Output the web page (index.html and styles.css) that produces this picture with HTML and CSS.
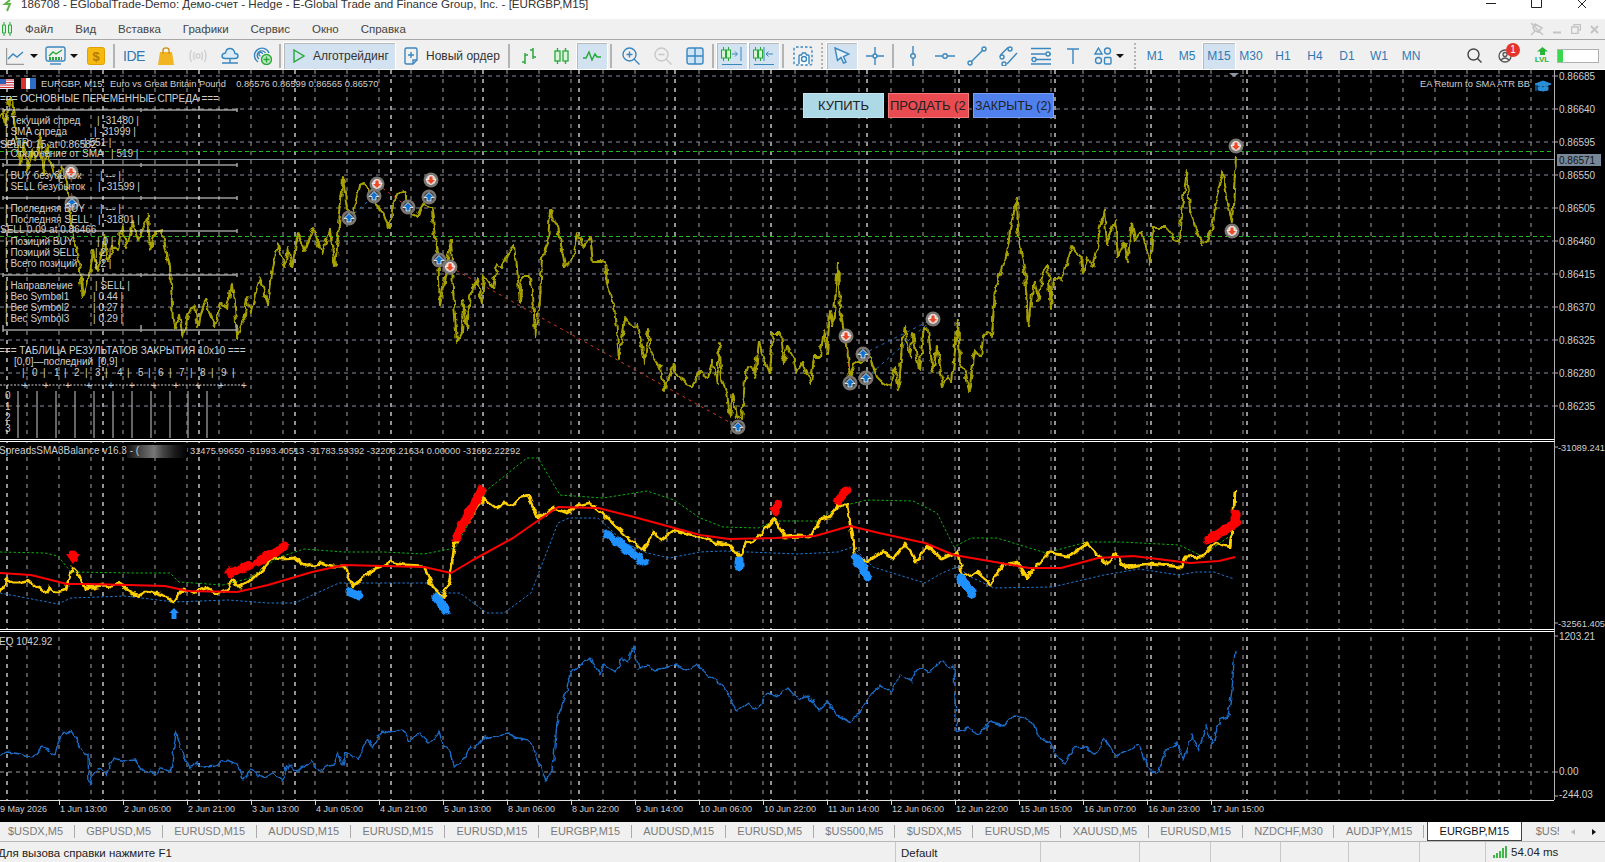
FILE: index.html
```html
<!DOCTYPE html>
<html lang="ru">

<head>
    <meta charset="UTF-8">
    <title>186708 - EGlobalTrade-Demo</title>
    <link rel="stylesheet" href="styles.css">
</head>

<body>
    <header class="titlebar">
        <svg class="app-icon" width="14" height="12" viewBox="0 0 14 12"><path d="M9 0 4 4H9L6 11" fill="none" stroke="#5fb548" stroke-width="2"/></svg>
        <span class="title">186708 - EGlobalTrade-Demo: Демо-счет - Hedge - E-Global Trade and Finance Group, Inc. - [EURGBP,M15]</span>
        <div class="winbtns">
            <svg width="10" height="8" viewBox="0 0 10 8"><path d="M0 3.5H10" stroke="#222"/></svg>
            <svg width="11" height="8" viewBox="0 0 11 8"><path d="M.5 0V7.5H10.5V0" fill="none" stroke="#222"/></svg>
            <svg width="11" height="8" viewBox="0 0 11 8"><path d="M1 0 9 8M9 0 1 8" stroke="#222"/></svg>
        </div>
    </header>

    <nav class="menubar">
        <svg class="menu-icon" width="12" height="14" viewBox="0 0 12 14"><path d="M3 0V14M9 0V14" stroke="#27a83a"/><path d="M1.500 3H4.500V11H1.500ZM7.500 3H10.500V11H7.500Z" fill="#d8f0d8" stroke="#27a83a"/></svg>
        <a>Файл</a><a>Вид</a><a>Вставка</a><a>Графики</a><a>Сервис</a><a>Окно</a><a>Справка</a>
        <div class="mdi-btns">
            <svg width="14" height="14" viewBox="0 0 14 14"><path d="M1 1 13 13M5 2 12 6 8 10 4 8 3 5ZM5 9 1 13" fill="none" stroke="#c4c4c4" stroke-width="1.500"/></svg>
            <svg width="9" height="9" viewBox="0 0 9 9"><path d="M0 7.500H8" stroke="#c4c4c4" stroke-width="2"/></svg>
            <svg width="10" height="10" viewBox="0 0 10 10"><path d="M3 2V.5H9.500V6H8M.5 3H7V9.500H.5Z" fill="none" stroke="#c4c4c4" stroke-width="1.500"/></svg>
            <svg width="9" height="9" viewBox="0 0 9 9"><path d="M1 1 8 8M8 1 1 8" stroke="#c4c4c4" stroke-width="2"/></svg>
        </div>
    </nav>

    <div class="toolbar">
        <div class="tool tool-drop">
            <svg class="ic" width="18" height="18" viewBox="0 0 18 18"><path d="M.5 1V17.500H18" stroke="#9a9a9a"/><path d="M2 12 7 7 11 10 17 5"/></svg>
            <i class="caret"></i>
        </div>
        <div class="tool tool-drop wide">
            <svg class="ic" width="21" height="20" viewBox="0 0 21 20"><rect x="1" y="1" width="19" height="14" rx="2"/><path d="M4 10 8 6 11 8 17 4" stroke="#27a83a"/><path d="M4 12.500H17" stroke="#27a83a" stroke-dasharray="2 1" stroke-width="3"/><path d="M5 18H16"/></svg>
            <i class="caret"></i>
        </div>
        <div class="tool">
            <svg width="18" height="18" viewBox="0 0 18 18"><rect x=".5" y=".5" width="17" height="17" rx="2" fill="#f7b90f" stroke="#e0a000"/><text x="9" y="13.500" class="dollar">$</text></svg>
        </div>
        <i class="sep tight"></i>
        <div class="tool tool-text">IDE</div>
        <div class="tool">
            <svg width="16" height="18" viewBox="0 0 16 18"><path d="M2 5H14L16 18H0Z" fill="#f2b522"/><path d="M5 7V3Q5 .8 8 .8T11 3V7" fill="none" stroke="#c98f10" stroke-width="1.300"/></svg>
        </div>
        <div class="tool">
            <svg width="18" height="14" viewBox="0 0 18 14" fill="none" stroke="#cfcfcf" stroke-width="1.400"><circle cx="9" cy="7" r="2"/><path d="M5.500 3Q3.500 7 5.500 11M12.500 3Q14.500 7 12.500 11M2.500 1Q-.5 7 2.500 13M15.500 1Q18.500 7 15.500 13"/></svg>
        </div>
        <div class="tool">
            <svg class="ic" width="18" height="18" viewBox="0 0 18 18"><path d="M4.500 11.500H14Q17 11.500 17 9T14 6.500Q13 1.500 9 1.500T4.500 6Q1 6.500 1 9T4.500 11.500Z" fill="#d9ecf8"/><path d="M9 11.500V16M1 16H17"/></svg>
        </div>
        <div class="tool">
            <svg class="ic" width="20" height="19" viewBox="0 0 20 19"><path d="M6 16A7.500 7.500 0 1 1 17 7M7 13A4.500 4.500 0 1 1 13.500 7M8.500 10A1.800 1.800 0 1 1 10.500 8"/><circle cx="14.500" cy="13.500" r="5" fill="#bfe8c2" stroke="#27a83a"/><path d="M14.500 10.500V16.500M11.500 13.500H17.500" stroke="#27a83a"/></svg>
        </div>
        <i class="sep tight"></i>
        <div class="tool-label algo">
            <svg width="12" height="14" viewBox="0 0 12 14"><path d="M1 1 11 7 1 13Z" fill="none" stroke="#27a83a" stroke-width="1.400"/></svg>
            <span>Алготрейдинг</span>
        </div>
        <div class="tool-label order">
            <svg class="ic" width="14" height="18" viewBox="0 0 14 18"><path d="M9 17H2.500Q1 17 1 15.500V2.500Q1 1 2.500 1H11.500Q13 1 13 2.500V13ZM9 17V13H13"/><path d="M7 5V11M4 8H10"/></svg>
            <span>Новый ордер</span>
        </div>
        <i class="sep after-label"></i>
        <div class="tool">
            <svg width="18" height="18" viewBox="0 0 18 18" fill="none" stroke="#27a83a" stroke-width="1.500"><path d="M5 6V17M2 15H5M5 8H8M13 1V12M10 3H13M13 10H16"/></svg>
        </div>
        <div class="tool">
            <svg width="15" height="16" viewBox="0 0 15 16" fill="#d8f5d8" stroke="#27a83a" stroke-width="1.300"><path d="M3.500 0V16M11.500 0V16"/><rect x="1" y="3" width="5" height="10"/><rect x="9" y="3" width="5" height="10"/></svg>
        </div>
        <div class="tool active thin">
            <svg width="18" height="12" viewBox="0 0 18 12" fill="none" stroke="#27a83a" stroke-width="1.500"><path d="M0 8H3L6 2 9 10 12 4 14 7H18"/></svg>
        </div>
        <i class="sep"></i>
        <div class="tool">
            <svg class="ic" width="18" height="18" viewBox="0 0 18 18"><circle cx="7.500" cy="7.500" r="6.500"/><path d="M12 12 17.500 17.500M7.500 4.500V10.500M4.500 7.500H10.500"/></svg>
        </div>
        <div class="tool">
            <svg class="ic muted" width="18" height="18" viewBox="0 0 18 18"><circle cx="7.500" cy="7.500" r="6.500"/><path d="M12 12 17.500 17.500M4.500 7.500H10.500"/></svg>
        </div>
        <div class="tool">
            <svg class="ic" width="18" height="18" viewBox="0 0 18 18"><rect x="1" y="1" width="16" height="16" rx="2" fill="#cfe5f5"/><path d="M9 1V17M1 9H17"/></svg>
        </div>
        <i class="sep tight"></i>
        <div class="tool active thin">
            <svg width="22" height="20" viewBox="0 0 22 20" fill="#d8f5d8" stroke="#27a83a"><path d="M2.500 1V15M7.500 1V15"/><rect x=".5" y="4" width="4" height="8"/><rect x="5.500" y="4" width="4" height="8"/><path d="M11 8H16M14 5.500 16.500 8 14 10.500" stroke="#3a87c0" fill="none"/><path d="M20 1V15M1 18.500H21" stroke="#3a87c0" fill="none"/></svg>
        </div>
        <div class="tool active thin gap-left">
            <svg width="22" height="20" viewBox="0 0 22 20" fill="#d8f5d8" stroke="#27a83a"><path d="M2.500 1V15M7.500 1V15"/><rect x=".5" y="4" width="4" height="8"/><rect x="5.500" y="4" width="4" height="8"/><path d="M13 8H20M15.500 5.500 13 8 15.500 10.500M11 1V15M1 18.500H21" stroke="#3a87c0" fill="none"/></svg>
        </div>
        <i class="sep"></i>
        <div class="tool">
            <svg class="ic" width="20" height="20" viewBox="0 0 20 20"><rect x="1" y="1" width="18" height="18" rx="2" stroke-dasharray="2.500 2"/><path d="M6 18V10Q6 9 7 9H8.500L9.500 7H12.500L13.500 9H15Q16 9 16 10V18" fill="#fff"/><circle cx="11" cy="13" r="2.500"/></svg>
        </div>
        <i class="grip"></i>
        <div class="tool active thin">
            <svg class="ic" width="16" height="17" viewBox="0 0 16 17"><path d="M1 1 15 7 9.500 9.500 12 15 9.500 16 7 10.500 3.500 13.500Z" fill="#e6f1fa"/></svg>
        </div>
        <div class="tool gap-left">
            <svg class="ic" width="18" height="18" viewBox="0 0 18 18"><circle cx="9" cy="9" r="2"/><path d="M9 0V7M9 11V18M0 9H7M11 9H18"/></svg>
        </div>
        <i class="sep tight"></i>
        <div class="tool">
            <svg class="ic" width="6" height="20" viewBox="0 0 6 20"><path d="M3 0V7.500M3 12.500V20"/><circle cx="3" cy="10" r="2.300"/></svg>
        </div>
        <div class="tool">
            <svg class="ic" width="20" height="6" viewBox="0 0 20 6"><path d="M0 3H7.500M12.500 3H20"/><circle cx="10" cy="3" r="2.300"/></svg>
        </div>
        <div class="tool">
            <svg class="ic" width="20" height="20" viewBox="0 0 20 20"><path d="M4 16 16 4"/><circle cx="3" cy="17" r="2"/><circle cx="17" cy="3" r="2"/></svg>
        </div>
        <div class="tool">
            <svg class="ic" width="20" height="20" viewBox="0 0 20 20"><path d="M1.500 9 9 1.500M8 18 18 7"/><circle cx="3" cy="11" r="2"/><circle cx="11" cy="3" r="2"/><circle cx="5" cy="18" r="2"/></svg>
        </div>
        <div class="tool">
            <svg class="ic" width="20" height="18" viewBox="0 0 20 18"><path d="M0 1.500H20M0 7H14.500M19 7H20M5 12.500H20M0 17H20"/><circle cx="17" cy="7" r="2"/><circle cx="3" cy="12.500" r="2"/></svg>
        </div>
        <div class="tool">
            <svg class="ic" width="12" height="16" viewBox="0 0 12 16"><path d="M0 1H12M6 1V16"/></svg>
        </div>
        <div class="tool tool-drop wide">
            <svg class="ic shapes" width="18" height="18" viewBox="0 0 18 18"><path d="M4.500 1 8 7H1Z"/><circle cx="13.500" cy="4" r="3"/><circle cx="4.500" cy="13.500" r="3"/><rect x="10.500" y="10.500" width="6.500" height="6.500" rx="1"/></svg>
            <i class="caret"></i>
        </div>
        <i class="grip period-grip"></i>
        <div class="periods">
            <a>M1</a><a>M5</a><a class="active">M15</a><a>M30</a><a>H1</a><a>H4</a><a>D1</a><a>W1</a><a>MN</a>
        </div>
        <div class="tool push-right">
            <svg width="15" height="15" viewBox="0 0 15 15" fill="none" stroke="#444" stroke-width="1.400"><circle cx="6.500" cy="6.500" r="5.500"/><path d="M10.500 10.500 14.500 14.500"/></svg>
        </div>
        <div class="tool account">
            <svg width="14" height="14" viewBox="0 0 14 14" fill="none" stroke="#555" stroke-width="1.300"><circle cx="7" cy="7" r="6"/><circle cx="7" cy="5.500" r="2"/><path d="M3 11Q7 7 11 11"/></svg>
            <b class="badge">1</b>
        </div>
        <div class="tool lvl">
            <svg width="11" height="8" viewBox="0 0 11 8"><path d="M5.500 0 11 4.500H8V8H3V4.500H0Z" fill="#27b53a"/></svg>
            <span>LVL</span>
        </div>
        <div class="margin-bar"><i></i></div>
    </div>

    <main class="chart">
        <div class="pane">
            <svg class="plot" width="1605" height="369" viewBox="0 70 1605 369">
                <defs>
                    <filter id="rough" filterUnits="userSpaceOnUse" x="-10" y="60" width="1625" height="750" color-interpolation-filters="sRGB">
                        <feTurbulence type="fractalNoise" baseFrequency=".16" numOctaves="1" seed="4"/>
                        <feDisplacementMap in="SourceGraphic" scale="7" xChannelSelector="R" yChannelSelector="G"/>
                    </filter>
                    <path id="vbase" class="grid-base" d="M27 70V800M59 70V800M91 70V800M123 70V800M155 70V800M187 70V800M219 70V800M251 70V800M283 70V800M315 70V800M347 70V800M379 70V800M411 70V800M443 70V800M475 70V800M507 70V800M539 70V800M571 70V800M603 70V800M635 70V800M667 70V800M699 70V800M731 70V800M763 70V800M795 70V800M827 70V800M859 70V800M891 70V800M923 70V800M955 70V800M987 70V800M1019 70V800M1051 70V800M1083 70V800M1115 70V800M1147 70V800M1179 70V800M1211 70V800M1243 70V800M1275 70V800M1307 70V800M1339 70V800M1371 70V800M1403 70V800M1435 70V800M1467 70V800M1499 70V800M1531 70V800"/>
                    <path id="vday" class="grid-day" d="M7 70V800M103 70V800M199 70V800M295 70V800M391 70V800M483 70V800M579 70V800M675 70V800M771 70V800M867 70V800M959 70V800M1055 70V800M1151 70V800M1247 70V800"/>
                    <g id="mk-up"><circle r="7.500" fill="#7a7672"/><circle r="5" fill="#3d3d3d"/><path d="M0-4.500 5 .5H2V4H-2V.5H-5Z" fill="#0f72cc" stroke="#fff" stroke-width=".8"/></g>
                    <g id="mk-down"><circle r="7.500" fill="#7a7672"/><circle r="5" fill="#d8d0cc"/><path d="M0 4.500 5-.5H2V-4H-2V-.5H-5Z" fill="#ea4a28" stroke="#fff" stroke-width=".8"/></g>
                    <linearGradient id="blur-strip">
                        <stop offset="0" stop-color="#111"/><stop offset=".2" stop-color="#444"/><stop offset=".45" stop-color="#777"/><stop offset=".6" stop-color="#444"/><stop offset=".8" stop-color="#1a1a1a"/><stop offset="1" stop-color="#000"/>
                    </linearGradient>
                </defs>

                <use href="#vbase"/>
                <use href="#vday"/>
                <path class="grid-h" d="M0 76H1554M0 109H1554M0 142H1554M0 175H1554M0 208H1554M0 241H1554M0 274H1554M0 307H1554M0 340H1554M0 373H1554M0 406H1554"/>
                <path class="level" d="M0 151.500H1554M0 236.500H1554"/>
                <path class="bid" d="M0 159.500H1554"/>

                <!-- trade lines -->
                <path class="trade-sell" d="M450 267 738 427M377 184 408 207M846 336 850 383M71 172 72 203"/>
                <path class="trade-buy" d="M863 354 933 319M866 378 933 319M349 218 374 196"/>

                <!-- price -->
                <g filter="url(#rough)">
                    <polyline id="price" class="price" points="0,118 3,110 6,125 9,100 12,98 15,130 18,150 21,165 24,140 28,170 32,150 36,160 40,135 44,175 47,145 50,160 53,170 58,180 62,165 67,183 70,215 73,237 77,253 80,270 83,298 87,280 90,275 93,250 97,270 100,262 104,235 108,262 113,247 118,250 122,225 127,247 133,222 138,240 145,223 148,215 150,250 155,232 162,230 166,250 170,267 173,322 175,328 179,315 183,337 188,315 195,305 198,328 202,310 206,298 210,312 215,327 220,303 227,308 232,285 235,308 237,337 241,325 245,315 247,297 251,312 255,295 260,277 264,290 268,305 273,267 278,245 285,267 288,247 292,268 298,233 305,250 313,228 322,253 330,230 335,267 339,225 343,178 347,210 352,215 360,185 365,183 370,197 380,208 389,228 393,205 400,192 405,190 408,210 417,217 423,203 432,210 435,237 438,253 440,305 445,277 451,240 453,290 457,343 462,333 463,300 467,330 470,295 477,280 482,303 484,275 493,288 497,265 502,267 508,253 515,245 520,303 522,277 530,277 533,293 535,337 540,300 542,257 548,243 550,210 558,227 565,267 573,258 578,233 583,247 590,237 593,262 605,262 607,283 612,302 615,304 619,360 625,318 632,327 638,325 645,363 648,328 652,357 660,367 665,390 673,365 678,377 692,387 700,372 708,378 712,360 717,383 719,343 722,380 727,393 730,417 733,393 737,417 742,420 745,378 748,366 753,367 755,377 759,342 763,357 770,373 773,333 781,333 784,363 787,346 793,357 797,372 802,363 811,383 814,357 820,357 824,330 827,353 830,310 833,327 838,263 840,310 847,347 850,377 857,360 862,363 870,357 877,377 883,383 890,386 895,367 899,390 902,343 905,327 910,357 913,333 919,370 924,327 928,330 933,373 937,347 943,386 947,375 952,382 958,320 960,363 966,373 969,392 975,350 981,357 983,337 987,332 992,337 995,287 1000,273 1007,253 1010,230 1017,198 1018,230 1022,257 1025,273 1028,327 1032,293 1035,283 1038,300 1043,273 1048,265 1051,308 1053,277 1062,280 1067,263 1072,247 1080,255 1083,273 1088,257 1092,267 1097,247 1100,227 1104,210 1107,243 1115,220 1118,257 1125,243 1127,262 1132,223 1135,240 1142,232 1145,243 1150,265 1153,227 1167,227 1172,237 1180,242 1183,200 1187,170 1190,210 1195,227 1203,245 1212,230 1215,207 1220,180 1223,173 1227,197 1232,223 1236,157"/>
                    <use href="#price" class="price-hi"/>
                </g>

                <!-- deal markers -->
                <use href="#mk-down" x="71" y="172"/>
                <use href="#mk-up" x="72" y="203"/>
                <use href="#mk-up" x="349" y="218"/>
                <use href="#mk-up" x="374" y="196"/>
                <use href="#mk-down" x="377" y="184"/>
                <use href="#mk-up" x="408" y="207"/>
                <use href="#mk-down" x="431" y="180"/>
                <use href="#mk-up" x="429" y="197"/>
                <use href="#mk-up" x="439" y="260"/>
                <use href="#mk-down" x="450" y="267"/>
                <use href="#mk-up" x="738" y="427"/>
                <use href="#mk-down" x="846" y="336"/>
                <use href="#mk-up" x="863" y="354"/>
                <use href="#mk-up" x="850" y="383"/>
                <use href="#mk-up" x="866" y="378"/>
                <use href="#mk-down" x="933" y="319"/>
                <use href="#mk-down" x="1236" y="146"/>
                <use href="#mk-down" x="1232" y="231"/>

                <path d="M1229 73H1239L1234 77Z" fill="#8c97a6"/>

                <!-- symbol header -->
                <rect x="0" y="79" width="14" height="10" fill="#e8e8f4"/>
                <path d="M0 80H14M0 82.500H14M0 85H14M0 87.500H14" stroke="#d93030"/>
                <rect x="0" y="79" width="6" height="5" fill="#2b5fb8"/>
                <rect x="21" y="78" width="15" height="11" fill="#fff"/>
                <rect x="21" y="78" width="5" height="11" fill="#d93030"/>
                <rect x="30" y="78" width="6" height="11" fill="#2b6cc4"/>
                <text x="41" y="87" class="lbl small">EURGBP, M15:  Euro vs Great Britain Pound    0.86576 0.86599 0.86565 0.86570</text>
                <text x="1530" y="87" class="lbl small" text-anchor="end">EA Return to SMA ATR BB</text>
                <path d="M1535 84 1543 81 1551 84 1543 87.500ZM1538 86.500V90Q1543 92 1548 90V86.500M1536 85V91" fill="#2b8fd8" stroke="#2b8fd8"/>

                <!-- spread info panel -->
                <text x="0" y="102" class="lbl">=== ОСНОВНЫЕ ПЕРЕМЕННЫЕ СПРЕДА ===</text>
                <path class="rule" d="M3 110H237M3 165H237M3 198H237M3 231H237M3 275H237M3 330H237"/>
                <path class="rule-tick" d="M3 108V112M141 108V112M237 108V112M3 163V167M141 163V167M237 163V167M3 196V200M141 196V200M237 196V200M3 229V233M141 229V233M237 229V233M3 273V277M141 273V277M237 273V277M3 325V332M141 325V332M237 325V332"/>

                <g class="lbl">
                    <text x="5" y="124">| Текущий спред</text><text x="97" y="124">| -31480 |</text>
                    <text x="5" y="135">| SMA спреда</text><text x="94" y="135">| -31999 |</text>
                    <text x="5" y="146">| ATR</text><text x="84" y="146">| 551 |</text>
                    <text x="5" y="157">| Отклонение от SMA</text><text x="111" y="157">| 519 |</text>
                    <text x="5" y="179">| BUY безубыток</text><text x="100" y="179">|     ---  |</text>
                    <text x="5" y="190">| SELL безубыток</text><text x="98" y="190">| -31599 |</text>
                    <text x="5" y="212">| Последняя BUY</text><text x="100" y="212">|     ---  |</text>
                    <text x="5" y="223">| Последняя SELL</text><text x="98" y="223">| -31801 |</text>
                    <text x="5" y="245">| Позиций BUY</text><text x="97" y="245">| 0  |</text>
                    <text x="5" y="256">| Позиций SELL</text><text x="95" y="256">| 2  |</text>
                    <text x="5" y="267">| Всего позиций</text><text x="95" y="267">| 2  |</text>
                    <text x="5" y="289">| Направление</text><text x="95" y="289">| SELL |</text>
                    <text x="5" y="300">| Вес Symbol1</text><text x="93" y="300">| 0.44 |</text>
                    <text x="5" y="311">| Вес Symbol2</text><text x="93" y="311">| 0.27 |</text>
                    <text x="5" y="322">| Вес Symbol3</text><text x="93" y="322">| 0.29 |</text>
                    <text x="0" y="148">SELL 0.15 at 0.86582</text>
                    <text x="0" y="233">SELL 0.09 at 0.86466</text>
                </g>

                <!-- closed results table -->
                <g class="lbl">
                    <text x="-1" y="354">=== ТАБЛИЦА РЕЗУЛЬТАТОВ ЗАКРЫТИЯ 10x10 ===</text>
                    <text x="14" y="365">[0,0]—последний</text><text x="98" y="365">[0,9]</text>
                    <text y="376" x="22 32 43 54 64 74 85 95 105 117 127 138 148 158 169 179 190 200 211 221 232">|0|1|2|3|4|5|6|7|8|9|</text>
                    <text y="389" x="22 43 65 86 108 129 151 173 195 218 241">+++++++++++</text>
                    <text x="5" y="399">0</text><text x="5" y="410">1</text><text x="5" y="421">2</text><text x="5" y="432">3</text>
                </g>
                <path class="rule-dash" d="M0 385H243"/>
                <path class="rule-bars" d="M18 391V438M37 391V438M56 391V438M75 391V438M94 391V438M113 391V438M132 391V438M151 391V438M170 391V438M188 391V438M207 391V438"/>

                <!-- price axis -->
                <path class="axis-line" d="M1554.500 70V439"/>
                <path class="axis-tick" d="M1554 76h4M1554 109h4M1554 142h4M1554 175h4M1554 208h4M1554 241h4M1554 274h4M1554 307h4M1554 340h4M1554 373h4M1554 406h4"/>
                <g class="lbl">
                    <text x="1559" y="80">0.86685</text><text x="1559" y="113">0.86640</text><text x="1559" y="146">0.86595</text>
                    <text x="1559" y="179">0.86550</text><text x="1559" y="212">0.86505</text><text x="1559" y="245">0.86460</text>
                    <text x="1559" y="278">0.86415</text><text x="1559" y="311">0.86370</text><text x="1559" y="344">0.86325</text>
                    <text x="1559" y="377">0.86280</text><text x="1559" y="410">0.86235</text>
                </g>
                <rect x="1557" y="154" width="44" height="12" fill="#778899"/>
                <text x="1559" y="163.500" class="lbl bid-text">0.86571</text>
            </svg>
            <!-- trade panel objects on the chart -->
            <div class="trade-btns">
                <button class="buy">КУПИТЬ</button>
                <button class="sell">ПРОДАТЬ (2</button>
                <button class="close">ЗАКРЫТЬ (2)</button>
            </div>
        </div>
        <div class="pane-sep"></div>

        <div class="pane">
            <svg class="plot" width="1605" height="187" viewBox="0 442 1605 187">
                <use href="#vbase"/>
                <use href="#vday"/>
                <polyline class="band-up" points="0,552 45,553 58,556 71,572 134,573 170,573 179,582 223,585 250,578 277,558 304,549 344,552 384,552 424,554 455,548 487,490 527,458 538,458 560,495 603,498 647,491 674,500 700,518 723,527 758,528 775,521 818,521 838,507 867,500 913,501 937,513 954,547 971,538 997,538 1046,553 1087,542 1121,542 1179,545 1202,556 1234,533"/>
                <polyline class="band-low" points="0,593 58,604 71,598 125,596 174,602 228,600 268,603 295,603 339,583 429,583 442,593 460,593 487,613 504,613 531,593 558,523 569,518 598,518 625,543 647,553 670,558 700,552 723,551 798,554 838,552 853,547 873,567 925,583 942,573 957,567 971,577 994,588 1052,587 1104,575 1139,569 1179,575 1196,572 1214,572 1234,579"/>
                <g filter="url(#rough)">
                    <polyline class="spread" points="0,592 7,580 13,583 20,583 29,581 38,588 47,593 50,587 56,592 66,590 72,567 78,573 85,588 94,587 103,585 112,586 120,583 130,592 138,595 146,591 156,593 165,596 174,603 183,589 192,593 205,587 217,594 228,590 232,579 239,587 254,578 262,570 272,558 283,559 295,558 306,566 321,563 332,566 344,566 353,586 363,578 373,570 391,562 405,565 424,566 433,587 443,597 449,583 455,543 466,525 478,505 484,499 496,508 505,503 513,505 520,497 528,495 538,518 554,508 567,513 580,505 589,503 607,518 625,535 643,550 654,533 661,540 674,530 688,534 700,537 717,543 729,545 740,558 746,543 758,538 775,518 784,537 797,536 810,537 821,519 830,517 838,505 847,505 853,543 856,557 867,562 882,552 893,559 905,543 916,562 928,546 942,559 957,552 963,577 977,572 991,584 1003,565 1017,562 1027,578 1037,565 1049,553 1069,556 1087,543 1107,565 1115,553 1126,568 1150,564 1182,567 1185,557 1202,556 1216,543 1230,547 1234,510 1235,489"/>
                </g>
                <polyline class="sma" points="0,573 31,575 67,584 89,584 165,586 188,591 237,592 268,585 312,572 344,565 424,567 451,573 473,560 513,538 536,522 558,507 598,508 634,517 700,535 729,539 775,538 815,536 850,526 879,533 925,543 954,555 1029,568 1061,568 1098,558 1133,556 1190,563 1219,561 1235,557"/>

                <!-- signal arrows -->
                <g filter="url(#rough)">
                    <path class="sig-red" d="M230 573 250 565M258 562 285 546M456 537 482 490M73 555V557M775 510 778 505M838 500 847 490M1208 540 1237 522M1235 522V513"/>
                    <path class="sig-blue" d="M350 592 358 595M436 597 446 610M607 534 645 563M739 561V567M856 558 868 577M960 577 972 593"/>
                </g>
                <path d="M66 554H80L73 564Z" fill="#f00"/>
                <path d="M174 608 179 613H176.500V619H171.500V613H169Z" fill="#1e90ff"/>

                <rect x="127" y="445" width="60" height="13" fill="url(#blur-strip)"/>
                <text x="-1" y="453.500" class="lbl">SpreadsSMA3Balance v16.3 - (</text>
                <text x="190" y="453.500" class="lbl small">31475.99650 -31993.40513 -31783.59392 -32203.21634 0.00000 -31692.22292</text>

                <path class="axis-line" d="M1554.500 442V629"/>
                <path class="axis-tick" d="M1554 447h4M1554 623h4"/>
                <text x="1558" y="451" class="lbl small">-31089.241</text>
                <text x="1558" y="627" class="lbl small">-32561.405</text>
            </svg>
        </div>
        <div class="pane-sep"></div>

        <div class="pane">
            <svg class="plot" width="1605" height="168" viewBox="0 632 1605 168">
                <use href="#vbase"/>
                <use href="#vday"/>
                <path class="grid-h soft" d="M0 772H1554"/>
                <g filter="url(#rough)">
                    <polyline class="equity" points="0,756 6,752 13,753 20,754 27,757 33,758 38,752 43,746 49,750 55,754 59,740 63,731 73,733 78,743 84,753 88,755 89,785 94,772 98,768 102,770 107,775 113,758 124,761 135,760 141,768 147,773 151,770 155,775 161,768 171,771 176,731 180,745 182,753 186,760 190,769 196,763 205,766 216,765 227,760 234,763 241,770 243,780 251,770 258,775 265,778 273,773 282,780 289,763 294,772 304,767 312,760 318,772 326,767 333,765 338,752 343,765 347,751 358,760 363,748 367,740 373,747 382,731 391,733 402,729 410,740 420,733 429,742 435,738 439,731 443,745 451,752 454,767 460,762 465,757 471,745 476,748 484,738 496,736 508,734 518,738 529,740 534,752 539,765 546,780 553,770 557,722 565,695 571,673 578,667 590,657 600,675 604,665 616,672 622,658 628,662 633,647 639,668 647,665 655,670 665,668 676,665 686,671 696,665 706,674 717,681 727,690 737,711 748,703 757,709 767,693 778,696 788,688 798,700 808,695 819,711 828,702 836,715 850,722 860,712 870,695 880,686 890,692 900,675 911,681 920,668 930,672 942,660 950,668 954,665 955,700 957,732 968,728 978,735 990,721 1004,726 1014,715 1024,717 1034,725 1040,738 1050,742 1058,758 1065,763 1072,748 1085,747 1095,755 1105,740 1116,756 1126,752 1138,745 1148,768 1157,773 1165,752 1177,742 1184,760 1192,735 1198,752 1206,725 1212,745 1220,720 1228,717 1232,690 1235,650"/>
                </g>

                <text x="-1" y="645" class="lbl">EQ 1042.92</text>
                <path class="axis-line" d="M1554.500 632V800"/>
                <path class="axis-tick" d="M1554 636h4M1554 772h4M1554 796h4"/>
                <text x="1559" y="640" class="lbl">1203.21</text>
                <text x="1559" y="775" class="lbl">0.00</text>
                <text x="1559" y="798" class="lbl">-244.03</text>
            </svg>
        </div>

        <div class="timeaxis">
            <span class="first">9 May 2026</span>
            <span>1 Jun 13:00</span><span>2 Jun 05:00</span><span>2 Jun 21:00</span><span>3 Jun 13:00</span><span>4 Jun 05:00</span><span>4 Jun 21:00</span><span>5 Jun 13:00</span><span>8 Jun 06:00</span><span>8 Jun 22:00</span><span>9 Jun 14:00</span><span>10 Jun 06:00</span><span>10 Jun 22:00</span><span>11 Jun 14:00</span><span>12 Jun 06:00</span><span>12 Jun 22:00</span><span>15 Jun 15:00</span><span>16 Jun 07:00</span><span>16 Jun 23:00</span><span>17 Jun 15:00</span>
        </div>
    </main>

    <div class="tabs">
        <a>$USDX,M5</a><a>GBPUSD,M5</a><a>EURUSD,M15</a><a>AUDUSD,M15</a><a>EURUSD,M15</a><a>EURUSD,M15</a><a>EURGBP,M15</a><a>AUDUSD,M15</a><a>EURUSD,M5</a><a>$US500,M5</a><a>$USDX,M5</a><a>EURUSD,M5</a><a>XAUUSD,M5</a><a>EURUSD,M15</a><a>NZDCHF,M30</a><a>AUDJPY,M15</a><a class="active">EURGBP,M15</a><span class="tab-cut">$US5</span>
        <div class="tab-arrows">
            <i class="arrow-l"></i><i class="arrow-r"></i>
        </div>
    </div>

    <footer class="statusbar">
        <div class="help">Для вызова справки нажмите F1</div>
        <div>Default</div>
        <div></div><div></div><div></div><div></div><div></div><div></div>
        <div class="ping">
            <svg width="14" height="12" viewBox="0 0 14 12" fill="#3fb54a"><rect x="0" y="9" width="2" height="3"/><rect x="3" y="7" width="2" height="5"/><rect x="6" y="5" width="2" height="7"/><rect x="9" y="2" width="2" height="10"/><rect x="12" y="0" width="2" height="12"/></svg>
            54.04 ms
        </div>
    </footer>
</body>

</html>
```

FILE: styles.css
```css
* {
    box-sizing: border-box;
}

html,
body {
    margin: 0;
    height: 862px;
    overflow: hidden;
}

body {
    width: 1605px;
    font-family: "Liberation Sans", Arial, sans-serif;
    background: #f0f0f0;
    color: #222;
}

/* title + menu */
.titlebar {
    height: 19px;
    background: #fff;
    display: flex;
    overflow: hidden;
    font-size: 11.600px;
}

.app-icon {
    margin: 0 0 0 1px;
}

.title {
    margin: -3px 0 0 6px;
    line-height: 14px;
    color: #333;
}

.winbtns {
    margin-left: auto;
    margin-right: 17px;
    display: flex;
    align-items: flex-start;
    gap: 35px;
}

.menubar {
    height: 20px;
    display: flex;
    align-items: center;
    padding-left: 1px;
    font-size: 11.500px;
    color: #444;
}

.menubar a {
    margin-right: 22px;
}

.menu-icon {
    margin-right: 12px;
}

.mdi-btns {
    margin-left: auto;
    margin-right: 6px;
    display: flex;
    align-items: center;
    gap: 9px;
}

/* toolbar */
.toolbar {
    height: 31px;
    border-top: 1px solid #a8a8a8;
    border-bottom: 1px solid #fff;
    display: flex;
    align-items: center;
    padding-left: 4px;
    padding-top: 2px;
    font-size: 12px;
}

.tool {
    width: 32px;
    height: 26px;
    flex: none;
    display: flex;
    align-items: center;
    justify-content: center;
}

.tool-drop {
    width: 36px;
    justify-content: flex-start;
    padding-left: 2px;
    gap: 6px;
}

.tool-drop.wide {
    width: 38px;
    margin-left: 2px;
    padding-left: 3px;
    gap: 4px;
}

.tool.thin {
    width: 30px;
}

.gap-left {
    margin-left: 2px;
}

.tool.active,
.tool-label.algo,
.periods a.active {
    background: #d2e2f0;
    box-shadow: 0 0 0 1px #fff, inset 1px 1px 0 #b8b8b8;
}

.tool-text {
    color: #2f7ab5;
    font-size: 14px;
    letter-spacing: -.5px;
}

.ic {
    fill: none;
    stroke: #3a87c0;
    stroke-width: 1.4;
}

.ic.muted {
    stroke: #c8c8c8;
}

.dollar {
    font-size: 13px;
    font-weight: bold;
    text-anchor: middle;
    fill: #b57a00;
}

.caret {
    width: 0;
    height: 0;
    border: 4px solid transparent;
    border-top: 4px solid #111;
    border-bottom: 0;
}

.sep {
    width: 2px;
    height: 24px;
    flex: none;
    background: #b4b4b4;
    margin: 0 3px;
}

.sep.tight {
    margin-left: 1px;
}

.sep.after-label {
    margin-left: 5px;
}

.grip {
    width: 2px;
    height: 26px;
    flex: none;
    margin: 0 4px 0 2px;
    border-left: 2px dotted #b4b4b4;
}

.grip.period-grip {
    margin: 0 3px 0 5px;
}

.tool-label {
    height: 26px;
    flex: none;
    display: flex;
    align-items: center;
    color: #333;
}

.tool-label.algo {
    width: 111px;
    padding-left: 9px;
    gap: 8px;
}

.tool-label.order {
    width: 103px;
    margin-left: 5px;
    padding-left: 4px;
    gap: 8px;
}

.periods {
    display: flex;
}

.periods a {
    width: 32px;
    height: 26px;
    line-height: 26px;
    text-align: center;
    color: #2f7ab5;
}

.push-right {
    margin-left: auto;
}

.account {
    position: relative;
    width: 30px;
}

.badge {
    position: absolute;
    left: 16px;
    top: 0;
    width: 14px;
    height: 14px;
    line-height: 14px;
    border-radius: 50%;
    background: #e5352b;
    color: #fff;
    font-size: 10px;
    font-weight: normal;
    text-align: center;
}

.lvl {
    width: 30px;
    margin-left: 7px;
    flex-direction: column;
    color: #27b53a;
    font-size: 8px;
    font-weight: bold;
    gap: 0;
}

.margin-bar {
    width: 42px;
    height: 14px;
    margin-right: 6px;
    background: #fff;
    border: 1px solid #b0b0b0;
}

.margin-bar i {
    display: block;
    width: 5px;
    height: 100%;
    background: #3ad84a;
}

/* chart window */
.chart {
    height: 752px;
    background: #000;
    display: flex;
    flex-direction: column;
}

.pane {
    position: relative;
}

.plot {
    display: block;
}

.pane-sep {
    width: 1555px;
    height: 3px;
    flex: none;
    border-top: 1px solid #fff;
    border-bottom: 1px solid #fff;
    border-right: 1px solid #b0b0b0;
}

.grid-base {
    stroke: #6c6c6c;
    stroke-width: 1.5;
    stroke-dasharray: 4 5;
    fill: none;
}

.grid-day {
    stroke: #c4c4c4;
    stroke-width: 1.5;
    stroke-dasharray: 4 5;
    fill: none;
}

.grid-h {
    stroke: #878d9b;
    stroke-width: 1;
    stroke-dasharray: 4 4;
    fill: none;
}

.grid-h.soft {
    stroke: #a0a0a0;
}

.level {
    stroke: #1fb81f;
    stroke-dasharray: 4 3;
    fill: none;
}

.bid {
    stroke: #778899;
    fill: none;
}

.trade-sell,
.trade-buy {
    stroke-width: 1;
    stroke-dasharray: 3 4;
    fill: none;
}

.trade-sell {
    stroke: #d8391f;
}

.trade-buy {
    stroke: #1a78d0;
}

.price {
    fill: none;
    stroke: #a8a200;
    stroke-width: 2;
    stroke-linejoin: round;
}

.price-hi {
    fill: none;
    stroke: #f4f000;
    stroke-width: 1.2;
    stroke-dasharray: 3 8;
}

.lbl {
    font-size: 10px;
    fill: #cfcfcf;
    white-space: pre;
}

.lbl.small {
    font-size: 9.300px;
}

.bid-text {
    fill: #111;
}

.rule {
    stroke: #e8e8e8;
    stroke-width: 1;
    fill: none;
}

.rule-tick {
    stroke: #a0a0a0;
    stroke-width: 1.5;
    fill: none;
}

.rule-dash {
    stroke: #cfcfcf;
    stroke-dasharray: 2 1.5;
    fill: none;
}

.rule-bars {
    stroke: #a8a8a8;
    stroke-width: 1.2;
    fill: none;
}

.axis-line {
    stroke: #b0b0b0;
    fill: none;
}

.axis-tick {
    stroke: #b0b0b0;
    fill: none;
}

.band-up,
.band-low {
    fill: none;
    stroke-width: 1;
    stroke-dasharray: 2.5 2;
}

.band-up {
    stroke: #0fae0f;
}

.band-low {
    stroke: #1e78d2;
}

.spread {
    fill: none;
    stroke: #ffd000;
    stroke-width: 2.8;
    stroke-linejoin: round;
}

.sma {
    fill: none;
    stroke: #f00;
    stroke-width: 2;
    stroke-linejoin: round;
}

.equity {
    fill: none;
    stroke: #1a6cc8;
    stroke-width: 1.4;
    stroke-linejoin: round;
}

.sig-red,
.sig-blue {
    fill: none;
    stroke-width: 9;
    stroke-linecap: round;
}

.sig-red {
    stroke: #f00;
}

.sig-blue {
    stroke: #1e90ff;
}

/* КУПИТЬ / ПРОДАТЬ / ЗАКРЫТЬ */
.trade-btns {
    position: absolute;
    left: 803px;
    top: 23px;
    display: flex;
    gap: 4px;
}

.trade-btns button {
    width: 81px;
    height: 25px;
    padding: 0 1px;
    border: 1px solid;
    border-radius: 0;
    font: 13px "Liberation Sans", Arial, sans-serif;
    color: #222;
    white-space: nowrap;
    overflow: hidden;
}

.trade-btns .buy {
    background: #add8e6;
    border-color: #c4e6f0;
}

.trade-btns .sell {
    background: #e94b50;
    border-color: #f47a7a;
    text-align: left;
}

.trade-btns .close {
    background: #4f80ee;
    border-color: #7aa0f4;
    text-align: left;
    font-size: 12.400px;
}

.timeaxis {
    width: 1554px;
    height: 22px;
    flex: none;
    display: flex;
    border-top: 1px solid #e0e0e0;
    color: #d0d0d0;
    font-size: 9px;
    line-height: 17px;
}

.timeaxis span {
    width: 64px;
    flex: none;
    padding-left: 1px;
    white-space: nowrap;
    background: linear-gradient(#d0d0d0, #d0d0d0) 0 0 / 1px 4px no-repeat;
}

.timeaxis .first {
    width: 59px;
    padding-left: 0;
    background: none;
}

/* symbol tabs */
.tabs {
    height: 20px;
    display: flex;
    align-items: stretch;
    border-bottom: 1px solid #b8b8b8;
    font-size: 11px;
    color: #7a7a7a;
    position: relative;
    overflow: hidden;
}

.tabs a {
    padding: 0 11.600px;
    line-height: 19px;
    background: linear-gradient(#aaa, #aaa) right 3px / 1px 13px no-repeat;
    white-space: nowrap;
}

.tabs a:first-child {
    padding-left: 8px;
}

.tabs a.active {
    margin-left: 3px;
    background: #fff;
    color: #111;
    border: 1px solid #444;
    border-top: 0;
    line-height: 18px;
    height: 19px;
}

.tab-cut {
    margin-left: 14px;
    line-height: 19px;
}

.tab-arrows {
    position: absolute;
    right: 0;
    top: 0;
    height: 19px;
    width: 46px;
    background: #f0f0f0;
    display: flex;
    align-items: center;
    gap: 17px;
    padding-left: 12px;
}

.tab-arrows i {
    width: 0;
    height: 0;
    border: 3px solid transparent;
}

.arrow-l {
    border-left: 0 !important;
    border-right: 4px solid #bbb !important;
}

.arrow-r {
    border-right: 0 !important;
    border-left: 4px solid #111 !important;
}

/* status */
.statusbar {
    height: 20px;
    display: grid;
    grid-template-columns: 896px 145px 99px 71px 70px 68px 71px 66px 119px;
    font-size: 11.500px;
    line-height: 23px;
    color: #222;
}

.statusbar div {
    border-right: 1px solid #c8c8c8;
    padding-left: 5px;
    white-space: nowrap;
    overflow: hidden;
}

.statusbar .help {
    padding-left: 0;
    text-indent: -2px;
}

.statusbar .ping {
    border-right: 0;
    display: flex;
    align-items: center;
    gap: 4px;
    padding-left: 7px;
}
```
